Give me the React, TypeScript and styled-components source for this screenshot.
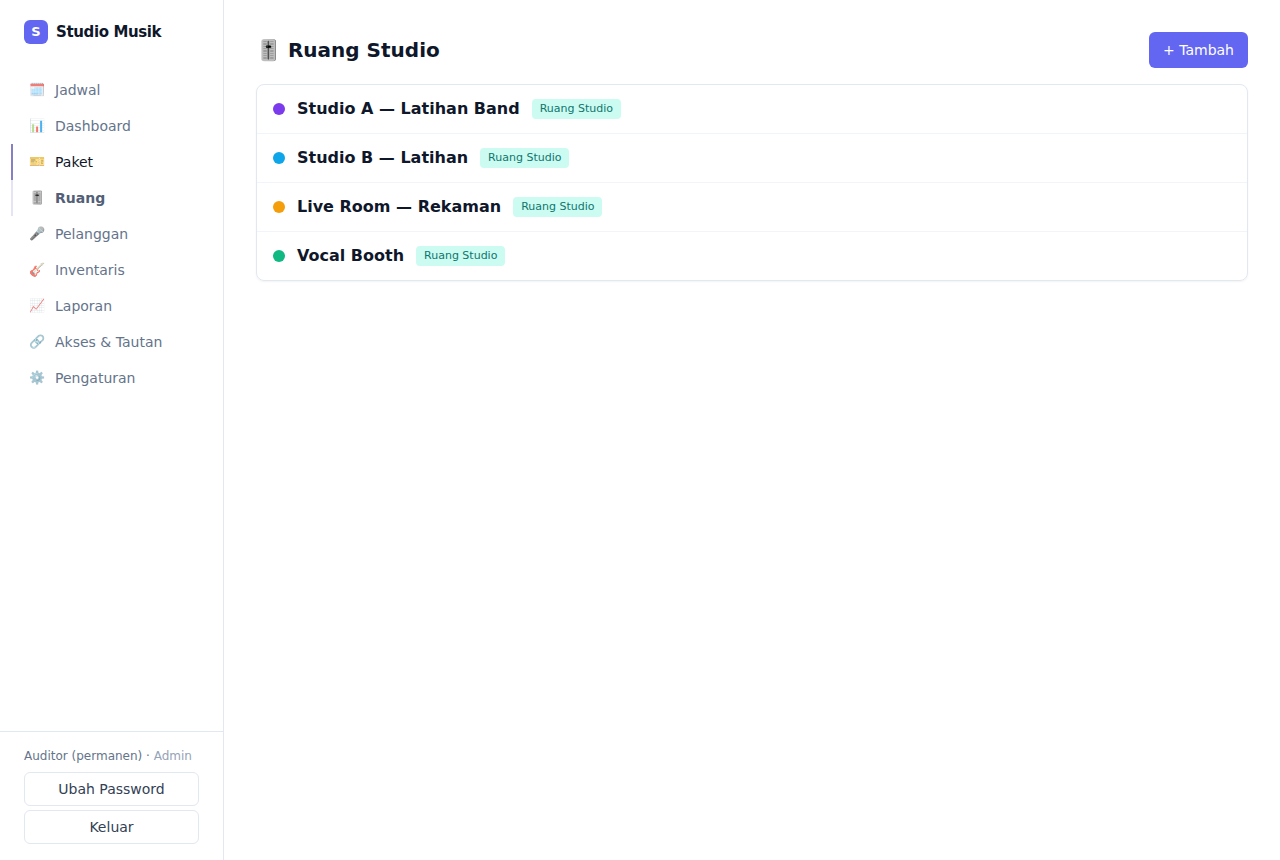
import React from "react";
import styled, { createGlobalStyle } from "styled-components";

const GlobalStyle = createGlobalStyle`
  *, *::before, *::after { box-sizing: border-box; }
  body { margin: 0; background: #fff; color: #0f172a; font-family: "DejaVu Sans", sans-serif; font-size: 14px; line-height: 20px; }
  button { font: inherit; cursor: pointer; }
`;
const Shell = styled.div`display: flex; height: 100vh;`;
const Sidebar = styled.aside`width: 224px; flex: none; display: flex; flex-direction: column; border-right: 1px solid #e2e8f0;`;
const Brand = styled.div`display: flex; align-items: center; gap: 8px; padding: 20px 24px; font-size: 15px; line-height: 24px; font-weight: 700; letter-spacing: -0.375px;`;
const Logo = styled.span`width: 24px; height: 24px; border-radius: 6px; background: #6366f1; color: #fff; font-size: 13px; letter-spacing: 0; text-align: center;`;
const Nav = styled.nav`flex: 1; padding: 8px 12px;`;
const NavItem = styled.a<{ $state?: "hover" | "active" }>`
  display: flex; align-items: center; gap: 9px; height: 36px; padding-left: 15px; margin-left: -1px;
  border-left: 2px solid ${p => p.$state === "hover" ? "#8580c4" : p.$state === "active" ? "#e4e4f4" : "transparent"};
  color: ${p => p.$state === "hover" ? "#0f172a" : p.$state === "active" ? "#526077" : "#64748b"};
  font-weight: ${p => p.$state === "active" ? 700 : 400};
`;
const NavIcon = styled.span<{ $strong: boolean }>`width: 18px; display: flex; justify-content: center; opacity: ${p => p.$strong ? 0.85 : 0.7}; font-size: 13px;`;
const Account = styled.footer`border-top: 1px solid #e2e8f0; padding: 16px 24px; display: flex; flex-direction: column; gap: 4px;`;
const User = styled.div`font-size: 12px; line-height: 16px; color: #64748b; margin-bottom: 4px; span { color: #94a3b8; }`;
const OutlineButton = styled.button`height: 34px; border: 1px solid #e2e8f0; border-radius: 6px; background: #fff; color: #334155; padding: 0;`;
const Main = styled.main`flex: 1; padding: 32px;`;
const Header = styled.header`display: flex; align-items: center; justify-content: space-between; margin-bottom: 16px;`;
const Title = styled.h1`margin: 0; font-size: 20px; line-height: 28px; font-weight: 700;`;
const AddButton = styled.button`height: 36px; padding: 0 14px; border: 0; border-radius: 6px; background: #6366f1; color: #fff;`;
const List = styled.section`border: 1px solid #e2e8f0; border-radius: 8px; box-shadow: 0 1px 2px rgba(15,23,42,.05);`;
const Room = styled.div`display: flex; align-items: center; gap: 12px; height: 49px; padding: 0 16px; border-bottom: 1px solid #f1f5f9; &:last-child { height: 48px; border: 0; }`;
const Dot = styled.span<{ $color: string }>`width: 12px; height: 12px; border-radius: 50%; background: ${p => p.$color};`;
const RoomName = styled.strong`font-size: 16px; line-height: 24px;`;
const Tag = styled.span`font-size: 11px; line-height: 16px; padding: 2px 8px; border-radius: 4px; background: #ccfbf1; color: #0f766e;`;

const links: { icon: string; label: string; state?: "hover" | "active" }[] = [
  { icon: "🗓️", label: "Jadwal" }, { icon: "📊", label: "Dashboard" },
  { icon: "🎫", label: "Paket", state: "hover" }, { icon: "🎚️", label: "Ruang", state: "active" },
  { icon: "🎤", label: "Pelanggan" }, { icon: "🎸", label: "Inventaris" },
  { icon: "📈", label: "Laporan" }, { icon: "🔗", label: "Akses & Tautan" }, { icon: "⚙️", label: "Pengaturan" },
];
const rooms = [
  ["Studio A — Latihan Band", "#7c3aed"], ["Studio B — Latihan", "#0ea5e9"],
  ["Live Room — Rekaman", "#f59e0b"], ["Vocal Booth", "#10b981"],
];

export default function App() {
  return <><GlobalStyle /><Shell>
    <Sidebar>
      <Brand><Logo>S</Logo>Studio Musik</Brand>
      <Nav>{links.map(l => <NavItem key={l.label} $state={l.state}><NavIcon $strong={l.state === "active"}>{l.icon}</NavIcon>{l.label}</NavItem>)}</Nav>
      <Account>
        <User>Auditor (permanen) · <span>Admin</span></User>
        <OutlineButton>Ubah Password</OutlineButton><OutlineButton>Keluar</OutlineButton>
      </Account>
    </Sidebar>
    <Main>
      <Header><Title>🎚️ Ruang Studio</Title><AddButton>+ Tambah</AddButton></Header>
      <List>{rooms.map(([name, color]) => <Room key={name}><Dot $color={color} /><RoomName>{name}</RoomName><Tag>Ruang Studio</Tag></Room>)}</List>
    </Main>
  </Shell></>;
}
